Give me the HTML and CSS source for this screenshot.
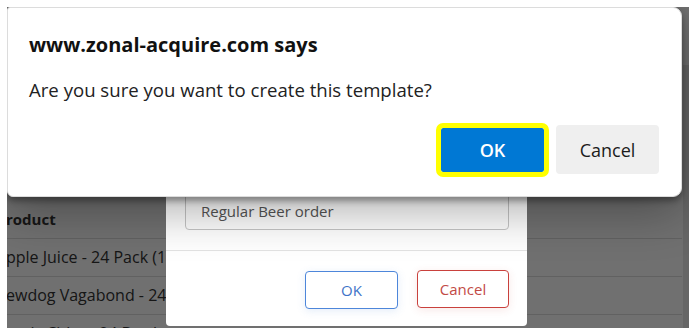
FILE: index.html
```html
<!DOCTYPE html>
<html lang="en">
<head>
<meta charset="utf-8">
<title>Create template</title>
<link rel="stylesheet" href="styles.css">
</head>
<body>
<div class="screen">
  <div class="page">
    <table class="grid">
      <thead>
        <tr><th>roduct</th></tr>
      </thead>
      <tbody>
        <tr><td>pple Juice - 24 Pack (1 x 24)</td></tr>
        <tr><td>ewdog Vagabond - 24 Pack</td></tr>
        <tr><td>antic Cider - 24 Bottles</td></tr>
      </tbody>
    </table>
    <div class="scrollbar"><div class="thumb"></div></div>
  </div>
  <div class="overlay"></div>
  <div class="modal">
    <div class="modal-body">
      <label class="field-label">Template name</label>
      <div class="field">Regular Beer order</div>
    </div>
    <div class="modal-foot">
      <button class="btn btn-ok">OK</button>
      <button class="btn btn-cancel">Cancel</button>
    </div>
  </div>
  <div class="alert">
    <h1 class="alert-title">www.zonal-acquire.com says</h1>
    <p class="alert-msg">Are you sure you want to create this template?</p>
    <div class="alert-actions">
      <button class="a-btn a-ok">OK</button>
      <button class="a-btn a-cancel">Cancel</button>
    </div>
  </div>
</div>
</body>
</html>
```
FILE: styles.css
```css
* { box-sizing: border-box; }
html, body { margin: 0; padding: 0; background: #fff; }
body { width: 693px; height: 328px; overflow: hidden; font-family: "Open Sans", "Noto Sans", sans-serif; }

.screen {
  position: relative;
  margin: 7px 0 0 7px;
  width: 682px;
  height: 321px;
  overflow: hidden;
}

.page {
  display: flex;
  height: 100%;
  background: #fff;
}
.grid {
  flex: 1;
  border-collapse: collapse;
  margin-top: 193px;
  align-self: flex-start;
  margin-left: -1px;
}
.grid th, .grid td {
  height: 38px;
  padding: 0;
  text-align: left;
  font-size: 16px;
  color: #333;
  border-bottom: 1px solid #ddd;
  white-space: nowrap;
}
.grid th { font-weight: 700; font-size: 15px; }
.scrollbar {
  width: 6px;
  margin-left: 1px;
  background: #e8e8e8;
  display: flex;
  flex-direction: column;
}
.thumb { height: 58px; background: #fff; }

.overlay {
  position: absolute;
  inset: 0;
  background: rgba(0,0,0,0.56);
}

.modal {
  position: absolute;
  left: 159px;
  bottom: 2px;
  width: 361px;
  background: #fff;
  border-radius: 4px;
}
.modal-body { padding: 18px 18px 20px 19px; }
.field-label { display: block; font-size: 14px; color: #333; margin-bottom: 8px; }
.field {
  height: 38px;
  border: 1px solid #c6c6c6;
  border-radius: 4px;
  padding: 0 15px;
  display: flex;
  align-items: center;
  font-size: 15px;
  color: #555;
}
.modal-foot {
  border-top: 1px solid #e3e3e3;
  padding: 19px 18px 17px;
  display: flex;
  justify-content: flex-end;
  gap: 19px;
}
.btn {
  height: 38px;
  background: #fff;
  border-radius: 4px;
  font-family: "Open Sans", sans-serif;
  font-size: 15px;
  padding: 0;
}
.btn-ok { width: 93px; border: 1px solid #4d86da; color: #3f74c8; margin-top: 1px; box-shadow: 0 2px 8px rgba(77,134,218,0.15); }
.btn-cancel { width: 92px; border: 1px solid #c9413d; color: #c24a46; box-shadow: 0 2px 8px rgba(201,65,61,0.12); }

.alert {
  position: absolute;
  left: 0;
  top: 0;
  width: 675px;
  height: 190px;
  background: #fff;
  border: 1px solid #dcdcdc;
  border-radius: 3px 9px 9px 6px;
  box-shadow: 0 4px 6px rgba(0,0,0,0.35), 0 14px 48px rgba(0,0,0,0.32);
  padding: 24px 22px 0 21px;
  display: flex;
  flex-direction: column;
}
.alert-title {
  margin: 0;
  font-size: 20px;
  line-height: 26px;
  font-weight: 700;
  color: #111;
}
.alert-msg {
  margin: 19px 0 0;
  font-size: 18.6px;
  line-height: 26px;
  color: #222;
}
.alert-actions {
  margin-top: 22px;
  display: flex;
  justify-content: flex-end;
  align-items: center;
  gap: 12px;
}
.a-btn {
  border: 0;
  border-radius: 4px;
  width: 103px;
  font-family: "Open Sans", sans-serif;
  font-size: 18px;
  padding: 0;
}
.a-ok {
  height: 44px;
  background: #0078d4;
  color: #fff;
  font-weight: 600;
  outline: 5px solid #ffff00;
  border-radius: 2px;
}
.a-cancel {
  height: 49px;
  background: #efefef;
  color: #1b1b1b;
  font-weight: 500;
}
```
